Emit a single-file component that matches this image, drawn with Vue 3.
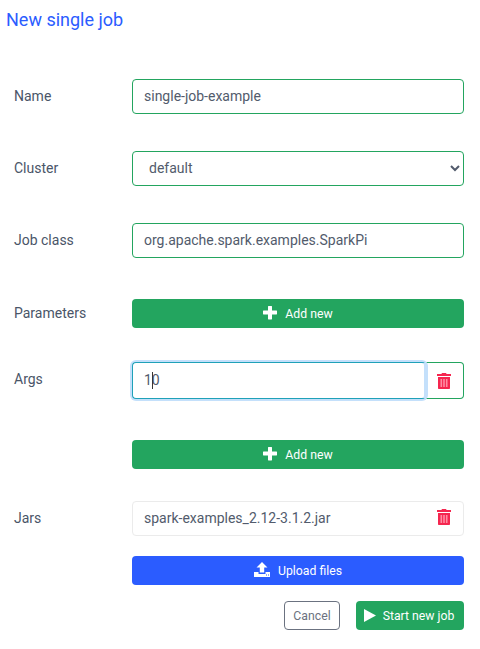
<script setup>
const plus = 'M5 1.500c0-.3.2-.5.5-.5h3c.3 0 .5.2.5.500V5.500h4.500c.3 0 .5.2.5.500v3c0 .3-.2.5-.5.5H9v4.500c0 .3-.2.5-.5.5h-3c-.3 0-.5-.2-.5-.5V9.500H.5C.2 9.500 0 9.300 0 9V6c0-.3.2-.5.5-.5H5z'
</script>

<template>
  <div class="page">
    <h1 class="title">New single job</h1>

    <div class="row first">
      <label class="label">Name</label>
      <input class="field ok" value="single-job-example" />
    </div>

    <div class="row">
      <label class="label">Cluster</label>
      <select class="field ok select"><option>default</option></select>
    </div>

    <div class="row">
      <label class="label">Job class</label>
      <input class="field ok" value="org.apache.spark.examples.SparkPi" />
    </div>

    <div class="row params">
      <label class="label">Parameters</label>
      <button class="btn green wide">
        <svg class="plus" viewBox="0 0 14 15"><path :d="plus" fill="#fff" /></svg>
        <span>Add new</span>
      </button>
    </div>

    <div class="row args">
      <label class="label">Args</label>
      <div class="args-group">
        <div class="focus-wrap">
          <input class="field focus" value="10" />
          <span class="caret"></span>
        </div>
        <div class="trash-box">
          <svg class="trash" viewBox="0 0 14 16">
            <path d="M5 0h4l.6 1H14v2H0V1h4.400zM1 4h12v11c0 .6-.4 1-1 1H2c-.6 0-1-.4-1-1z" fill="#f5264f" />
            <path d="M3.500 6h1.600v8H3.500zM6.200 6h1.600v8H6.200zM8.900 6h1.600v8H8.900z" fill="#ff8da3" />
          </svg>
        </div>
      </div>
    </div>

    <div class="row add2">
      <span class="label"></span>
      <button class="btn green wide">
        <svg class="plus" viewBox="0 0 14 15"><path :d="plus" fill="#fff" /></svg>
        <span>Add new</span>
      </button>
    </div>

    <div class="row jars">
      <label class="label">Jars</label>
      <div class="file">
        <span>spark-examples_2.12-3.1.2.jar</span>
        <svg class="trash" viewBox="0 0 14 16">
          <path d="M5 0h4l.6 1H14v2H0V1h4.400zM1 4h12v11c0 .6-.4 1-1 1H2c-.6 0-1-.4-1-1z" fill="#f5264f" />
          <path d="M3.500 6h1.600v8H3.500zM6.200 6h1.600v8H6.200zM8.900 6h1.600v8H8.900z" fill="#ff8da3" />
        </svg>
      </div>
    </div>

    <div class="row upload">
      <span class="label"></span>
      <button class="btn blue wide">
        <svg class="up" viewBox="0 0 16 15">
          <path d="M8 0l5.500 5.500H10.200V10.500H5.800V5.500H2.500zM0 10h4.500v2h7v-2H16v5H0z" fill="#fff" />
          <path d="M12 12.500h1v1h-1zM14 12.500h1v1h-1z" fill="#2b5cff" />
        </svg>
        <span>Upload files</span>
      </button>
    </div>

    <div class="actions">
      <button class="btn cancel">Cancel</button>
      <button class="btn green start">
        <svg class="play" viewBox="0 0 12 13"><path d="M0 0L12 6.500L0 13Z" fill="#fff" /></svg>
        <span>Start new job</span>
      </button>
    </div>
  </div>
</template>

<style scoped>
.page {
  width: 480px;
  height: 649px;
  box-sizing: border-box;
  padding: 9px 16px 0 14px;
  font-family: Roboto, sans-serif;
  color: #4a5568;
  background: #fff;
  overflow: hidden;
}
.title {
  margin: 0 0 0 -8px;
  font-size: 18px;
  font-weight: 400;
  line-height: 22px;
  color: #2b5cff;
}
.row {
  display: grid;
  grid-template-columns: 118px 332px;
  align-items: center;
  height: 35px;
  margin-top: 37px;
}
.row.first { margin-top: 48px; }
.label {
  font-size: 14px;
  line-height: 20px;
  color: #4a5568;
  position: relative;
  top: -1px;
}
.field {
  box-sizing: border-box;
  width: 100%;
  height: 35px;
  padding: 0 11px 1px;
  font-family: Roboto, sans-serif;
  font-size: 14px;
  color: #525b6c;
  background: #fff;
  border-radius: 4px;
  border: 1px solid #23a55f;
  outline: none;
}
.select { padding: 0 8px 1px 12px; }
.row.params { height: 29px; margin-top: 41px; }
.btn {
  display: flex;
  align-items: center;
  justify-content: center;
  box-sizing: border-box;
  height: 29px;
  border: 0;
  border-radius: 4px;
  font-family: Roboto, sans-serif;
  font-size: 12.25px;
  color: #fff;
  padding: 0;
}
.wide { width: 332px; }
.green { background: #23a55f; }
.blue { background: #2b5cff; }
.plus { width: 14px; height: 15px; margin-right: 8px; position: relative; top: -1px; }
.up { width: 16px; height: 15px; margin-right: 8px; position: relative; top: -1px; }
.row.args { height: 37px; margin-top: 34px; }
.row.args .label { top: -2px; }
.args-group {
  display: flex;
  width: 332px;
  height: 37px;
}
.focus-wrap {
  position: relative;
  width: 294px;
  height: 37px;
  z-index: 1;
  flex: none;
}
.focus {
  height: 37px;
  border-color: #1fa1b8;
  border-right: 2px solid #c4e0fb;
  box-shadow: 0 0 0 2px #c4e0fb;
}
.caret {
  position: absolute;
  left: 20px;
  top: 10px;
  width: 1px;
  height: 17px;
  background: #363636;
}
.trash-box {
  flex: 1;
  display: flex;
  align-items: center;
  justify-content: center;
  border: 1px solid #23a55f;
  border-left: 0;
  border-radius: 0 4px 4px 0;
  padding-right: 2px;
}
.trash { width: 14px; height: 16px; }
.row.add2 { height: 29px; margin-top: 41px; }
.row.jars { margin-top: 32px; }
.file {
  box-sizing: border-box;
  width: 332px;
  height: 35px;
  padding: 0 12px 1px 11px;
  display: flex;
  align-items: center;
  justify-content: space-between;
  font-size: 14px;
  color: #525b6c;
  border: 1px solid #ebebeb;
  border-radius: 4px;
}
.file .trash { position: relative; top: -1px; }
.row.upload { height: 29px; margin-top: 20px; }
.actions {
  display: flex;
  justify-content: flex-end;
  gap: 16px;
  margin-top: 16px;
  width: 450px;
}
.cancel {
  width: 56px;
  background: #fff;
  color: #6b7280;
  border: 1px solid #6b7280;
}
.start { width: 108px; padding-right: 2px; }
.play { width: 12px; height: 13px; margin-right: 7px; }
</style>
